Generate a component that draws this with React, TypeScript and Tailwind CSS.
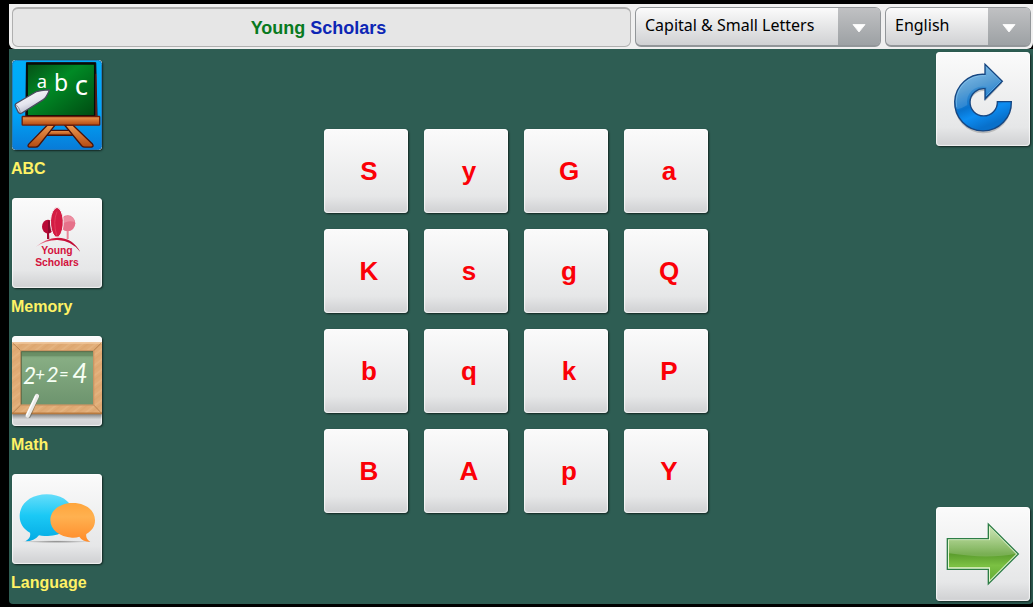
import React, { useState } from "react";

const tile =
  "rounded bg-linear-to-b from-[#fbfbfb] via-[#e6e7e8] via-80% to-[#cfd0d2] shadow-[1px_1px_2px_rgba(0,0,0,0.6),inset_0_0_1px_1px_rgba(255,255,255,0.7)]";

function BoardIcon() {
  return (
    <svg viewBox="34 28 274 274" className="block size-full" aria-hidden="true">
      <defs>
        <linearGradient id="sky" x1="0" y1="0" x2="0" y2="1">
          <stop offset="0" stopColor="#00aef8" />
          <stop offset="0.6" stopColor="#00a4f6" />
          <stop offset="1" stopColor="#087bd8" />
        </linearGradient>
        <linearGradient id="slate" x1="0" y1="0" x2="1" y2="1">
          <stop offset="0" stopColor="#064f16" />
          <stop offset="0.4" stopColor="#008a25" />
          <stop offset="1" stopColor="#004a12" />
        </linearGradient>
        <linearGradient id="wood" x1="0" y1="0" x2="0" y2="1">
          <stop offset="0" stopColor="#ef9a50" />
          <stop offset="1" stopColor="#b34a12" />
        </linearGradient>
        <linearGradient id="chalk" x1="0" y1="0" x2="0.5" y2="1">
          <stop offset="0" stopColor="#fff" />
          <stop offset="0.6" stopColor="#e4e4ee" />
          <stop offset="1" stopColor="#a9abc0" />
        </linearGradient>
      </defs>
      <rect x="35" y="29" width="272" height="272" rx="12" fill="url(#sky)" stroke="#1672b8" strokeWidth="3" />
      <g stroke="#48120a" strokeWidth="4" strokeLinejoin="round" fill="url(#wood)">
        <path d="M136 242H224L230 257H126Z" />
        <path d="M142 226H165L115 289Q111 294 103 293H86Q80 291 85 284Z" />
        <path d="M194 226H219L279 284Q284 291 276 293H258Q251 294 246 289Z" />
      </g>
      <path d="M78 36H289L293 205H76Z" fill="#5c1710" stroke="#150808" strokeWidth="3" strokeLinejoin="round" />
      <path d="M80 40H286L286 198H80Z" fill="url(#slate)" stroke="#050b08" strokeWidth="5" strokeLinejoin="round" />
      <path d="M290 70V200" stroke="#aa3826" strokeWidth="2" />
      <rect x="65" y="200" width="236" height="26" rx="2" fill="url(#wood)" stroke="#6c1d09" strokeWidth="4" />
      <g fill="#fff" fontFamily="'Noto Sans', sans-serif">
        <text x="109" y="113" fontSize="56">a</text>
        <text x="162" y="121" fontSize="70">b</text>
        <text x="225" y="134" fontSize="84">c</text>
      </g>
      <path d="M44 168Q42 163 49 159L109 124Q118 121 148 119Q138 145 127 150L63 190Q57 193 53 187Z" fill="url(#chalk)" stroke="#4b4b60" strokeWidth="4" strokeLinejoin="round" />
      <path d="M47 165Q55 170 60 188" fill="none" stroke="#8d8fa4" strokeWidth="3" />
    </svg>
  );
}

function TreesIcon() {
  return (
    <svg viewBox="36 24 270 270" className="block size-full" aria-hidden="true">
      <defs>
        <linearGradient id="hill" x1="0" x2="1" y1="0" y2="0">
          <stop offset="0" stopColor="#eca6b2" />
          <stop offset="0.4" stopColor="#d5163f" />
          <stop offset="1" stopColor="#b80a33" />
        </linearGradient>
      </defs>
      <ellipse cx="144" cy="110" rx="18" ry="21" fill="#b80a36" />
      <path d="M144 90Q154 95 158 108Q154 125 144 131Z" fill="#8c0a2e" />
      <path d="M141 128H147L148 147H141Z" fill="#a80a32" />
      <ellipse cx="203" cy="100" rx="23" ry="24" fill="#e6718a" />
      <path d="M182 96Q185 77 205 77Q221 79 224 96Q204 89 182 105Z" fill="#ed8fa2" />
      <path d="M200 122H206V147H200Z" fill="#e98598" />
      <path d="M171 52C148 58 144 120 166 141H176C197 120 193 58 171 52Z" fill="#d31c43" stroke="#f7f7f7" strokeWidth="3" />
      <path d="M171 65Q158 96 170 136" fill="none" stroke="#e2395a" strokeWidth="3" />
      <path d="M107 171Q135 145 173 143Q218 143 241 186Q216 152 173 150Q139 149 107 171Z" fill="url(#hill)" />
      <g fill="#d3123d" fontFamily="'Liberation Sans', sans-serif" fontWeight="700" fontSize="31" textAnchor="middle">
        <text x="171" y="191">Young</text>
        <text x="171" y="227">Scholars</text>
      </g>
    </svg>
  );
}

function MathIcon() {
  return (
    <svg viewBox="36 33 270 270" className="block size-full" aria-hidden="true">
      <defs>
        <linearGradient id="green" x1="0" y1="0" x2="0" y2="1">
          <stop offset="0" stopColor="#72996f" />
          <stop offset="0.15" stopColor="#87ad83" />
          <stop offset="1" stopColor="#6d946e" />
        </linearGradient>
        <linearGradient id="shade" x1="0" y1="0" x2="0" y2="1">
          <stop offset="0" stopColor="#777" />
          <stop offset="1" stopColor="#777" stopOpacity="0" />
        </linearGradient>
        <pattern id="grain" width="34" height="24" patternUnits="userSpaceOnUse" patternTransform="rotate(-38)">
          <rect width="34" height="24" fill="#e0ab75" />
          <rect y="3" width="34" height="5" fill="#e4b37f" />
          <rect y="14" width="34" height="3" fill="#dba46d" />
        </pattern>
      </defs>
      <rect x="37" y="265" width="268" height="18" fill="url(#shade)" />
      <rect x="36" y="52" width="270" height="215" rx="3" fill="url(#grain)" />
      <path d="M36 54H306" stroke="#f0c79c" strokeWidth="4" />
      <path d="M36 265H306" stroke="#b87b40" strokeWidth="5" />
      <path d="M38 54L62 77M304 54L281 77M38 264L62 240M304 264L281 240" stroke="#a36e3e" strokeWidth="2" />
      <rect x="62" y="77" width="219" height="163" fill="url(#green)" stroke="#cb9563" strokeWidth="4" />
      <path d="M64 80H279V94H64Z" fill="#567850" opacity="0.45" />
      <path d="M64 238V80H279" fill="none" stroke="#5b6c49" strokeWidth="3" />
      <g fill="#f6fff4" fontFamily="Lato, sans-serif" fontStyle="italic">
        <text x="69" y="176" fontSize="68">2</text>
        <text x="106" y="166" fontSize="50">+</text>
        <text x="139" y="171" fontSize="64">2</text>
        <text x="177" y="166" fontSize="50">=</text>
        <text x="217" y="173" fontSize="80">4</text>
      </g>
      <path d="M112 213L87 273" stroke="#4b4b3d" strokeWidth="12" strokeLinecap="round" opacity="0.45" />
      <path d="M111 213L83 272" stroke="#e9e9e7" strokeWidth="13" strokeLinecap="round" />
      <path d="M107 213L80 270" stroke="#fff" strokeWidth="4" strokeLinecap="round" />
    </svg>
  );
}

function ChatIcon() {
  return (
    <svg viewBox="36 27 270 270" className="block size-full" aria-hidden="true">
      <defs>
        <linearGradient id="cyan" x1="0" y1="0" x2="0" y2="1">
          <stop offset="0" stopColor="#65ddfa" />
          <stop offset="0.45" stopColor="#1bc9f5" />
          <stop offset="1" stopColor="#04abe4" />
        </linearGradient>
        <linearGradient id="orange" x1="0" y1="0" x2="0" y2="1">
          <stop offset="0" stopColor="#ffa53c" />
          <stop offset="0.35" stopColor="#ffb150" />
          <stop offset="1" stopColor="#ff8b2a" />
        </linearGradient>
        <radialGradient id="ground">
          <stop offset="0" stopColor="#8b8b8b" />
          <stop offset="1" stopColor="#8b8b8b" stopOpacity="0" />
        </radialGradient>
      </defs>
      <ellipse cx="170" cy="230" rx="108" ry="4" fill="url(#ground)" />
      <path d="M140 88C188 88 221 115 221 151C221 188 183 215 139 213Q127 214 117 211Q103 229 76 229Q94 218 90 203C70 192 59 175 59 153C59 116 93 88 140 88Z" fill="url(#cyan)" />
      <path d="M218 114C258 114 285 136 285 166C285 184 276 198 259 207Q256 222 271 231Q246 229 238 215Q228 219 216 218C179 216 151 194 151 165C151 136 180 114 218 114Z" fill="url(#orange)" />
    </svg>
  );
}

function ReloadIcon() {
  return (
    <svg viewBox="48 21 282 282" className="block size-full" aria-hidden="true">
      <defs>
        <linearGradient id="blue" x1="0" y1="0" x2="0.35" y2="1">
          <stop offset="0" stopColor="#8cc9f0" />
          <stop offset="0.4" stopColor="#4392cf" />
          <stop offset="0.65" stopColor="#0872cd" />
          <stop offset="0.8" stopColor="#0d8df2" />
          <stop offset="1" stopColor="#0870cb" />
        </linearGradient>
      </defs>
      <path d="M195 64L247 115L195 169V138A41 41 0 1 0 232 176H274A85 85 0 1 1 195 95Z" fill="#888" opacity="0.45" />
      <path d="M195 58L247 109L195 162V131A41 41 0 1 0 232 170H274A85 85 0 1 1 195 88Z" fill="url(#blue)" stroke="#164681" strokeWidth="4" />
      <path d="M199 68L240 109L199 151V126A46 46 0 0 0 142 180Q127 190 111 193A79 79 0 0 1 199 92Z" fill="#fff" opacity="0.12" />
      <path d="M198 65L242 109L198 153M198 92A80 80 0 0 0 110 187" fill="none" stroke="#a8dbfb" strokeWidth="2" opacity="0.6" />
    </svg>
  );
}

function NextIcon() {
  return (
    <svg viewBox="48 30 282 282" className="block size-full" aria-hidden="true">
      <defs>
        <linearGradient id="leaf" x1="0" y1="0" x2="0" y2="1">
          <stop offset="0" stopColor="#72b43c" />
          <stop offset="0.5" stopColor="#5b9d2d" />
          <stop offset="0.72" stopColor="#7bc043" />
          <stop offset="1" stopColor="#65ae36" />
        </linearGradient>
        <linearGradient id="gloss" x1="0" y1="0" x2="0" y2="1">
          <stop offset="0" stopColor="#fff" stopOpacity="0.6" />
          <stop offset="1" stopColor="#fff" stopOpacity="0.15" />
        </linearGradient>
      </defs>
      <path d="M82 125H205V81L295 171L205 261V217H82Z" fill="#e5f6cf" stroke="#2d7d46" strokeWidth="4" />
      <path d="M87 130H210V93L288 171L210 249V211H87Z" fill="url(#leaf)" />
      <path d="M87 130H210V93L287 170Q205 187 87 169Z" fill="url(#gloss)" />
    </svg>
  );
}

const subjects = [
  { name: "ABC", Icon: BoardIcon },
  { name: "Memory", Icon: TreesIcon },
  { name: "Math", Icon: MathIcon },
  { name: "Language", Icon: ChatIcon },
];

const letters = ["S", "y", "G", "a", "K", "s", "g", "Q", "b", "q", "k", "P", "B", "A", "p", "Y"];

function Picker({ label, options, className }: { label: string; options: string[]; className: string }) {
  const [value, setValue] = useState(options[0]);
  return (
    <div
      className={`grid rounded-md border border-b-2 border-[#929699] bg-linear-to-b from-[#fbfbfb] to-[#d0d1d3] ${className}`}
    >
      <select
        aria-label={label}
        value={value}
        onChange={(e) => setValue(e.target.value)}
        className="col-start-1 row-start-1 h-full w-full cursor-pointer appearance-none bg-transparent pr-11 pb-1 pl-[9px] font-['Noto_Sans',sans-serif] text-[16px] leading-6 text-black"
      >
        {options.map((o) => (
          <option key={o}>{o}</option>
        ))}
      </select>
      <span className="pointer-events-none col-start-1 row-start-1 flex w-[42px] items-center justify-center justify-self-end rounded-r bg-linear-to-b from-[#c0c1c3] to-[#9da1a4]">
        <svg viewBox="0 0 14 9" className="mt-1 h-[9px] w-[14px]" aria-hidden="true">
          <path d="M1 0.5H13L7 8Z" fill="#fff" stroke="#f7f7f7" strokeLinejoin="round" />
        </svg>
      </span>
    </div>
  );
}

export default function App() {
  return (
    <div className="flex min-h-screen flex-col bg-black pt-1 pb-[3px] pl-[9px] font-['Liberation_Sans',Arial,sans-serif]">
      <header className="flex h-[45px] gap-1 rounded-b-md bg-[#f0f0f0] pt-[3px] pr-[2px] pb-[2px] pl-[3px]">
        <h1 className="flex flex-1 items-center justify-center rounded-md border border-t-2 border-[#b0b0b0] bg-[#e6e6e6] pr-[6px] text-[18px] leading-5 font-bold">
          <span className="text-[#087a20]">Young</span>&nbsp;<span className="text-[#0d26b5]">Scholars</span>
        </h1>
        <Picker
          label="Activity"
          options={["Capital & Small Letters", "Capital Letters", "Small Letters"]}
          className="w-[246px]"
        />
        <Picker label="Language" options={["English", "Français", "Español"]} className="w-[146px]" />
      </header>

      <div className="flex flex-1 rounded-b bg-[#2e5d53] px-[3px] py-[3px]">
        <nav aria-label="Subjects" className="flex w-[90px] flex-col gap-[17px] pt-2">
          {subjects.map(({ name, Icon }) => (
            <button key={name} type="button" className="block cursor-pointer text-left">
              <span className={`block size-[90px] overflow-hidden ${tile}`}>
                <Icon />
              </span>
              <span className="-ml-px block pt-[7px] text-[16px] leading-6 font-bold text-[#fff265]">{name}</span>
            </button>
          ))}
        </nav>

        <main className="flex flex-1 items-start justify-center pt-[77px] pr-[6px]">
          <div className="grid grid-cols-4 gap-4">
            {letters.map((letter) => (
              <button
                key={letter}
                type="button"
                className={`size-[84px] cursor-pointer pl-[6px] text-[26px] leading-8 font-bold text-[#fb0007] ${tile}`}
              >
                {letter}
              </button>
            ))}
          </div>
        </main>

        <aside className="flex w-[94px] flex-col justify-between">
          <button type="button" aria-label="Restart" className={`size-[94px] cursor-pointer ${tile}`}>
            <ReloadIcon />
          </button>
          <button type="button" aria-label="Next" className={`size-[94px] cursor-pointer ${tile}`}>
            <NextIcon />
          </button>
        </aside>
      </div>
    </div>
  );
}
